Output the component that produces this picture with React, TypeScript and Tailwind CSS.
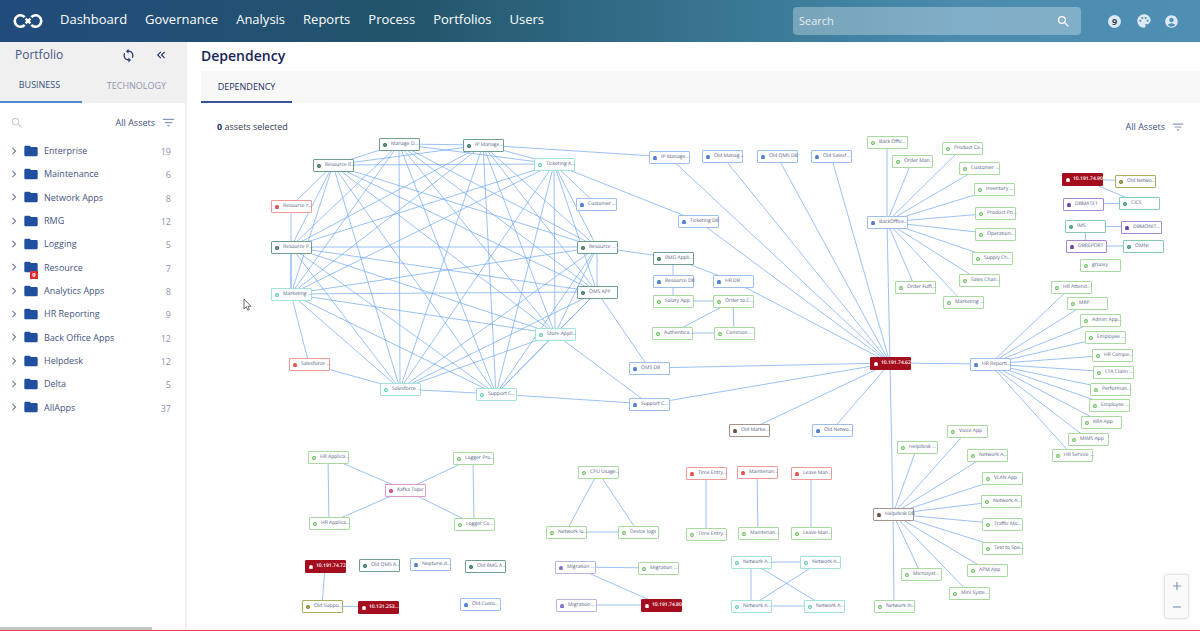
import type { ReactNode } from "react";
import clsx from "clsx";
import {
  MdAccountCircle,
  MdAdd,
  MdFilterList,
  MdFolder,
  MdKeyboardArrowRight,
  MdKeyboardDoubleArrowLeft,
  MdPalette,
  MdRemove,
  MdSearch,
  MdSync,
} from "react-icons/md";

const navLinks = ["Dashboard", "Governance", "Analysis", "Reports", "Process", "Portfolios", "Users"];

const folders: Array<{ name: string; count: number; alerts?: number }> = [
  { name: "Enterprise", count: 19 },
  { name: "Maintenance", count: 6 },
  { name: "Network Apps", count: 8 },
  { name: "RMG", count: 12 },
  { name: "Logging", count: 5 },
  { name: "Resource", count: 7, alerts: 9 },
  { name: "Analytics Apps", count: 8 },
  { name: "HR Reporting", count: 9 },
  { name: "Back Office Apps", count: 12 },
  { name: "Helpdesk", count: 12 },
  { name: "Delta", count: 5 },
  { name: "AllApps", count: 37 },
];

type Kind =
  | "core"
  | "service"
  | "app"
  | "db"
  | "dbAlert"
  | "dbLegacy"
  | "dbPurple"
  | "dbLilac"
  | "mainframe"
  | "olive"
  | "topic"
  | "server";

const kinds: Record<Kind, { box: string; icon: string; shape: "dot" | "ring" | "db" }> = {
  core: { box: "border-[#6f9f8a]", icon: "text-[#2f6b50]", shape: "dot" },
  service: { box: "border-[#a3e4d8]", icon: "text-[#5cc9b8]", shape: "ring" },
  app: { box: "border-[#a9dba0]", icon: "text-[#6cbb5e]", shape: "ring" },
  db: { box: "border-[#9dbdea]", icon: "text-[#3b6fc4]", shape: "db" },
  dbAlert: { box: "border-[#f09a9a]", icon: "text-[#e03c3c]", shape: "db" },
  dbLegacy: { box: "border-[#a8928e]", icon: "text-[#5e3a36]", shape: "db" },
  dbPurple: { box: "border-[#a688d0]", icon: "text-[#5b2a9c]", shape: "db" },
  dbLilac: { box: "border-[#b5b5e6]", icon: "text-[#6a62c8]", shape: "db" },
  mainframe: { box: "border-[#86cbb2]", icon: "text-[#2f9673]", shape: "dot" },
  olive: { box: "border-[#aaad5c]", icon: "text-[#7b7f1f]", shape: "dot" },
  topic: { box: "border-[#dd9cc4]", icon: "text-[#b5337f]", shape: "dot" },
  server: { box: "border-[#a30d1e] bg-[#a30d1e]", icon: "text-white", shape: "db" },
};

// [id, label, kind, centre x, centre y]
const nodes: Array<[string, string, Kind, number, number]> = [
  ["resourceR", "Resource R...", "core", 333, 165],
  ["manage", "Manage D...", "core", 399, 144],
  ["ip", "IP Manage...", "core", 483, 145],
  ["ticketing", "Ticketing A...", "service", 554, 164],
  ["resourceRed", "Resource r...", "dbAlert", 291, 206],
  ["resourceP", "Resource P...", "core", 291, 247],
  ["marketing", "Marketing ...", "service", 291, 294],
  ["salesRed", "Salesforce ...", "dbAlert", 309, 364],
  ["salesforce", "Salesforce ...", "service", 400, 389],
  ["support", "Support C...", "service", 496, 394],
  ["store", "Store Appli...", "service", 555, 334],
  ["qms", "QMS APP", "core", 597, 292],
  ["resource", "Resource ...", "core", 597, 247],
  ["customer", "Customer ...", "db", 596, 204],

  ["ipDb", "IP Manage...", "db", 669, 157],
  ["oldManage", "Old Manag...", "db", 722, 156],
  ["oldQms", "Old QMS DB", "db", 777, 156],
  ["oldSales", "Old Salesf...", "db", 831, 156],
  ["ticketDb", "Ticketing DB", "db", 698, 221],
  ["rmg", "RMG Appli...", "core", 673, 258],
  ["resourceDb", "Resource DB", "db", 673, 281],
  ["hrDb", "HR DB", "db", 733, 281],
  ["salary", "Salary App", "app", 673, 301],
  ["order", "Order to C...", "app", 733, 301],
  ["auth", "Authentica...", "app", 672, 333],
  ["common", "Common ...", "app", 734, 333],
  ["qmsDb", "QMS DB", "db", 649, 368],
  ["supportDb", "Support C...", "db", 649, 404],
  ["oldMarket", "Old Marke...", "dbLegacy", 749, 430],
  ["oldNetwork", "Old Netwo...", "db", 832, 430],
  ["server62", "10.191.74.62", "server", 890, 363],

  ["backOffice", "BackOffice...", "db", 887, 222],
  ["bo1", "Back Offic...", "app", 887, 142],
  ["bo2", "Order Man...", "app", 912, 161],
  ["bo3", "Product Ca...", "app", 962, 148],
  ["bo4", "Customer ...", "app", 979, 168],
  ["bo5", "Inventory ...", "app", 994, 189],
  ["bo6", "Product Pri...", "app", 995, 213],
  ["bo7", "Operation...", "app", 995, 234],
  ["bo8", "Supply Ch...", "app", 992, 258],
  ["bo9", "Sales Chan...", "app", 979, 280],
  ["bo10", "Marketing ...", "app", 963, 302],
  ["bo11", "Order Fulfi...", "app", 915, 287],

  ["hrReport", "HR Reporti...", "db", 990, 364],
  ["hr1", "HR Attend...", "app", 1071, 287],
  ["hr2", "MRP", "app", 1087, 303],
  ["hr3", "Admin App...", "app", 1100, 320],
  ["hr4", "Employee ...", "app", 1105, 337],
  ["hr5", "HR Compe...", "app", 1112, 355],
  ["hr6", "LTA Claim ...", "app", 1113, 372],
  ["hr7", "Performan...", "app", 1110, 389],
  ["hr8", "Employee ...", "app", 1109, 405],
  ["hr9", "KRA App", "app", 1101, 422],
  ["hr10", "MIMS App", "app", 1088, 439],
  ["hr11", "HR Service ...", "app", 1072, 455],

  ["helpdesk", "Helpdesk DB", "dbLegacy", 893, 514],
  ["hd1", "Helpdesk ...", "app", 917, 447],
  ["hd2", "Voice App", "app", 967, 431],
  ["hd3", "Network A...", "app", 987, 455],
  ["hd4", "VLAN App", "app", 1002, 478],
  ["hd5", "Network A...", "app", 1001, 501],
  ["hd6", "Traffic Mo...", "app", 1002, 524],
  ["hd7", "Text to Spe...", "app", 1002, 548],
  ["hd8", "APM App", "app", 987, 570],
  ["hd9", "Mini Syste...", "app", 969, 593],
  ["hd10", "Microsyst...", "app", 921, 574],
  ["hd11", "Network In...", "app", 894, 606],

  ["server90", "10.191.74.90", "server", 1082, 179],
  ["oldNet2", "Old Netwo...", "olive", 1135, 181],
  ["dbmate", "DBMATE1", "dbPurple", 1083, 204],
  ["cics", "CICS", "mainframe", 1139, 203],
  ["ims", "IMS", "mainframe", 1085, 226],
  ["dbmonit", "DBMONIT...", "dbPurple", 1141, 227],
  ["dbreport", "DBREPORT", "dbPurple", 1086, 246],
  ["omni", "OMNI", "mainframe", 1143, 246],
  ["groovy", "groovy", "app", 1100, 265],

  ["hrApp1", "HR Applica...", "app", 328, 457],
  ["logPro", "Logger Pro...", "app", 473, 458],
  ["kafka", "Kafka Topic", "topic", 405, 490],
  ["hrApp2", "HR Applica...", "app", 329, 523],
  ["logCo", "Logger Co...", "app", 474, 524],
  ["cpu", "CPU Usage...", "app", 598, 472],
  ["netLogs", "Network lo...", "app", 566, 532],
  ["devLogs", "Device logs", "app", 638, 532],
  ["timeDb", "Time Entry...", "dbAlert", 706, 473],
  ["maintDb", "Maintenan...", "dbAlert", 757, 472],
  ["leaveDb", "Leave Man...", "dbAlert", 811, 473],
  ["time", "Time Entry...", "app", 706, 534],
  ["maint", "Maintenan...", "app", 758, 533],
  ["leave", "Leave Man...", "app", 811, 533],

  ["server72", "10.191.74.72", "server", 325, 566],
  ["oldSupport", "Old Suppo...", "olive", 322, 606],
  ["server253", "10.131.253...", "server", 378, 607],
  ["oldQmsA", "Old QMS A...", "core", 379, 565],
  ["neptune", "Neptune.d...", "db", 430, 564],
  ["oldRmg", "Old RMG A...", "core", 485, 566],
  ["oldCust", "Old Custo...", "db", 480, 604],
  ["mig1", "Migration ...", "dbLilac", 575, 567],
  ["mig2", "Migration ...", "app", 658, 568],
  ["mig3", "Migration ...", "dbLilac", 576, 605],
  ["server80", "10.191.74.80", "server", 661, 605],
  ["net1", "Network A...", "service", 751, 562],
  ["net2", "Network A...", "service", 820, 562],
  ["net3", "Network A...", "service", 751, 606],
  ["net4", "Network A...", "service", 824, 606],
];

// every asset in this ring talks to every other one
const ring = [
  "resourceR",
  "manage",
  "ip",
  "ticketing",
  "resourceP",
  "marketing",
  "salesforce",
  "support",
  "store",
  "qms",
  "resource",
];

const links: Record<string, string[]> = {
  resourceRed: ["resourceR", "marketing"],
  salesRed: ["marketing", "salesforce"],
  ticketing: ["customer", "ticketDb"],
  ip: ["ipDb"],
  resource: ["rmg"],
  qms: ["qmsDb"],
  store: ["supportDb"],
  support: ["supportDb"],
  rmg: ["resourceDb", "hrDb"],
  salary: ["resourceDb", "order"],
  auth: ["order", "common"],
  common: ["order"],
  server62: [
    "ipDb", "oldManage", "oldQms", "oldSales", "ticketDb", "hrDb", "qmsDb",
    "supportDb", "oldMarket", "oldNetwork", "backOffice", "hrReport", "helpdesk",
  ],
  backOffice: ["bo1", "bo2", "bo3", "bo4", "bo5", "bo6", "bo7", "bo8", "bo9", "bo10", "bo11"],
  hrReport: ["hr1", "hr2", "hr3", "hr4", "hr5", "hr6", "hr7", "hr8", "hr9", "hr10", "hr11"],
  helpdesk: ["hd1", "hd2", "hd3", "hd4", "hd5", "hd6", "hd7", "hd8", "hd9", "hd10", "hd11"],
  server90: ["oldNet2", "cics"],
  dbmate: ["cics"],
  ims: ["dbmonit", "dbreport"],
  dbreport: ["omni"],
  hrApp1: ["kafka", "hrApp2"],
  logPro: ["kafka", "logCo"],
  kafka: ["hrApp2", "logCo"],
  cpu: ["netLogs", "devLogs"],
  netLogs: ["devLogs"],
  timeDb: ["time"],
  maintDb: ["maint"],
  leaveDb: ["leave"],
  oldSupport: ["server72", "server253"],
  mig1: ["mig2", "server80"],
  mig3: ["server80"],
  net1: ["net2", "net3", "net4"],
  net3: ["net2", "net4"],
};

const edges: Array<[string, string]> = [
  ...ring.flatMap((a, i) => ring.slice(i + 1).map((b): [string, string] => [a, b])),
  ...Object.entries(links).flatMap(([a, targets]) => targets.map((b): [string, string] => [a, b])),
];

const points = new Map(nodes.map(([id, , , x, y]) => [id, { x, y }]));

// current pan of the graph inside its canvas
const pan = { x: -187, y: -103 };

function NodeIcon({ shape }: { shape: "dot" | "ring" | "db" }) {
  if (shape === "db") {
    return (
      <svg viewBox="0 0 8 8" className="size-1 shrink-0">
        <path d="M1 2c0-2 6-2 6 0v5c0 1-6 1-6 0z" fill="currentColor" stroke="currentColor" />
        <path d="M2.5 4h3" stroke="#fff" strokeWidth="1" opacity=".7" />
      </svg>
    );
  }
  return (
    <svg viewBox="0 0 8 8" className="size-1 shrink-0">
      <circle cx="4" cy="4" r="2.8" fill="none" stroke="currentColor" strokeWidth={shape === "dot" ? 2.4 : 2.2} />
      {shape === "dot" && <circle cx="4" cy="4" r="1.6" fill="currentColor" />}
    </svg>
  );
}

function Graph() {
  return (
    <div className="absolute [text-rendering:geometricPrecision]" style={{ left: pan.x, top: pan.y }}>
      <svg className="absolute left-0 top-0 overflow-visible" width="1" height="1" aria-hidden="true">
        {edges.map(([a, b]) => {
          const from = points.get(a)!;
          const to = points.get(b)!;
          return (
            <line
              key={`${a}-${b}`}
              x1={from.x}
              y1={from.y}
              x2={to.x}
              y2={to.y}
              stroke="#6fa8f5"
              strokeWidth="1"
              strokeOpacity="0.7"
            />
          );
        })}
      </svg>
      {nodes.map(([id, label, kind, x, y]) => {
        const { box, icon, shape } = kinds[kind];
        return (
          <div
            key={id}
            className={clsx(
              "absolute flex h-[13px] w-[41px] items-center whitespace-nowrap rounded-[1px] border pl-[3px] text-[5px] leading-none",
              kind === "server" ? "gap-[3px] font-semibold text-white" : "gap-1 bg-white text-[#4f5d80]",
              box,
            )}
            style={{ left: x - 20, top: y - 6 }}
          >
            <span className={clsx("flex", icon)}>
              <NodeIcon shape={shape} />
            </span>
            {label}
          </div>
        );
      })}
    </div>
  );
}

function IconButton({ label, className, children }: { label: string; className?: string; children: ReactNode }) {
  return (
    <button aria-label={label} className={clsx("flex items-center justify-center", className)}>
      {children}
    </button>
  );
}

function Logo() {
  return (
    <svg viewBox="0 0 30 16" className="h-4 w-[30px] shrink-0" fill="none" stroke="#fff">
      <path d="M11.700 4.200A5.700 5.700 0 1 0 11.700 11.800" strokeWidth="2.600" />
      <path d="M18.300 4.200A5.700 5.700 0 1 1 18.300 11.800" strokeWidth="2.600" />
      <path d="M12.600 5.600l4.800 4.800M17.400 5.600l-4.800 4.800" strokeWidth="2.400" />
    </svg>
  );
}

function TopBar() {
  return (
    <header className="flex h-[42px] shrink-0 items-center bg-[linear-gradient(to_right,#214b7c,#22546b_33%,#3c7c98_65%,#4b8bb0_80%,#4f8fb3)] pl-[13px] pr-[21px] text-white">
      <Logo />
      <nav className="ml-[17px] flex gap-[18px] pb-1 text-[13px] leading-5">
        {navLinks.map((label) => (
          <a key={label} href="#">
            {label}
          </a>
        ))}
      </nav>
      <label className="ml-auto flex h-7 w-72 shrink-0 items-center rounded-[4px] bg-white/30 pl-1.5 pr-2.5">
        <input
          type="search"
          aria-label="Search"
          placeholder="Search"
          className="min-w-0 flex-1 bg-transparent text-[11px] text-white outline-none placeholder:text-[#e3eef4]"
        />
        <MdSearch size={15} />
      </label>
      <div className="ml-[27px] flex items-center gap-[15px] text-[#dde9f7]">
        <IconButton
          label="Notifications"
          className="size-[13px] rounded-full bg-[#dde9f7] text-[9px] font-bold leading-none text-[#2c3e55]"
        >
          9
        </IconButton>
        <IconButton label="Theme">
          <MdPalette size={16} />
        </IconButton>
        <IconButton label="Account" className="-ml-[3px]">
          <MdAccountCircle size={15} />
        </IconButton>
      </div>
    </header>
  );
}

function Sidebar() {
  return (
    <aside className="flex w-[187px] shrink-0 flex-col border-r-2 border-[#f0f0f2]">
      <div className="bg-[#f1f0f0]">
        <div className="flex h-[26px] items-center pl-[15px] pr-[17px] text-[#44557f]">
          <h2 className="flex-1 text-[12px]">Portfolio</h2>
          <IconButton label="Refresh" className="mr-[18px] text-[#25386b]">
            <MdSync size={15} />
          </IconButton>
          <IconButton label="Collapse sidebar" className="text-[#25386b]">
            <MdKeyboardDoubleArrowLeft size={14} />
          </IconButton>
        </div>
        <div role="tablist" className="flex h-[35px] text-[9px]">
          <button role="tab" aria-selected="true" className="w-[82px] border-b-2 border-[#5288cc] pr-[3px] text-[#35507f]">
            BUSINESS
          </button>
          <button role="tab" aria-selected="false" className="flex-1 pl-1.5 text-[#8e96aa]">
            TECHNOLOGY
          </button>
        </div>
      </div>

      <div className="mt-3 flex items-center pl-2.5 pr-[9px]">
        <IconButton label="Search assets" className="text-[#c9ced9]">
          <MdSearch size={14} />
        </IconButton>
        <button className="ml-auto flex items-center gap-1.5 text-[9px] text-[#3f5080]">
          All Assets
          <MdFilterList size={15} className="text-[#8a97b6]" />
        </button>
      </div>

      <ul className="mt-[9px] grid h-[280px] auto-rows-fr">
        {folders.map(({ name, count, alerts }) => (
          <li key={name} className="flex items-center pl-[7px] pr-3.5 text-[9px] text-[#44547f]">
            <IconButton label={`Expand ${name}`} className="text-[#74809a]">
              <MdKeyboardArrowRight size={14} />
            </IconButton>
            <span className="relative ml-0.5 text-[#1f4f9e]">
              <MdFolder size={16} />
              {alerts && (
                <span className="absolute -bottom-1 right-px flex size-2 items-center justify-center bg-[#e02b2f] text-[6px] font-bold leading-none text-white">
                  {alerts}
                </span>
              )}
            </span>
            <a href="#" className="ml-[5px] flex-1">
              {name}
            </a>
            <span className="pt-0.5 text-[#8b94ab]">{count}</span>
          </li>
        ))}
      </ul>
      <div className="mt-auto h-[3px] w-[152px] bg-[#c4c4c4]" />
    </aside>
  );
}

export default function App() {
  return (
    <div className="flex h-screen flex-col overflow-hidden border-b border-[#e0474c] bg-white font-['Open_Sans','Noto_Sans',sans-serif]">
      <TopBar />
      <div className="flex min-h-0 flex-1">
        <Sidebar />
        <main className="flex min-w-0 flex-1 flex-col">
          <h1 className="ml-3.5 h-[29px] pt-0.5 text-[14px] font-semibold leading-6 text-[#142458]">Dependency</h1>
          <div role="tablist" className="ml-3.5 flex h-8 bg-[#f8f8f8]">
            <button
              role="tab"
              aria-selected="true"
              className="w-[91px] border-b-2 border-[#35569c] pt-0.5 text-[9px] font-medium text-[#1c2f63]"
            >
              DEPENDENCY
            </button>
          </div>

          {/* Graph canvas */}
          <section aria-label="Dependency graph" className="relative min-h-0 flex-1 overflow-hidden">
            <Graph />
            <div className="relative flex items-center justify-between pl-[30px] pr-[15px] pt-4">
              <p className="text-[9px] leading-4 text-[#333b4d]">
                <b className="text-[#1c2f63]">0</b> assets selected
              </p>
              <button className="flex items-center gap-1.5 text-[9px] text-[#3f5080]">
                All Assets
                <MdFilterList size={14} className="text-[#8a97b6]" />
              </button>
            </div>

            {/* Zoom controls */}
            <div className="absolute bottom-3 right-3 flex h-[43px] w-[23px] flex-col rounded-[2px] bg-[#fafafa] text-[#8295b3] shadow-[0_0_3px_rgba(0,0,0,0.3)]">
              <IconButton label="Zoom in" className="flex-1">
                <MdAdd size={14} />
              </IconButton>
              <IconButton label="Zoom out" className="flex-1">
                <MdRemove size={14} />
              </IconButton>
            </div>

            {/* Pointer */}
            <svg viewBox="0 0 9 13" className="absolute left-14 top-[195px] h-[13px] w-[9px]" aria-hidden="true">
              <path d="M1 1v10l2.300-2.100 1.500 3.300 1.600-.7-1.500-3.200H8z" fill="#fff" stroke="#4a4a4a" strokeWidth=".8" />
            </svg>
          </section>
        </main>
      </div>
    </div>
  );
}
